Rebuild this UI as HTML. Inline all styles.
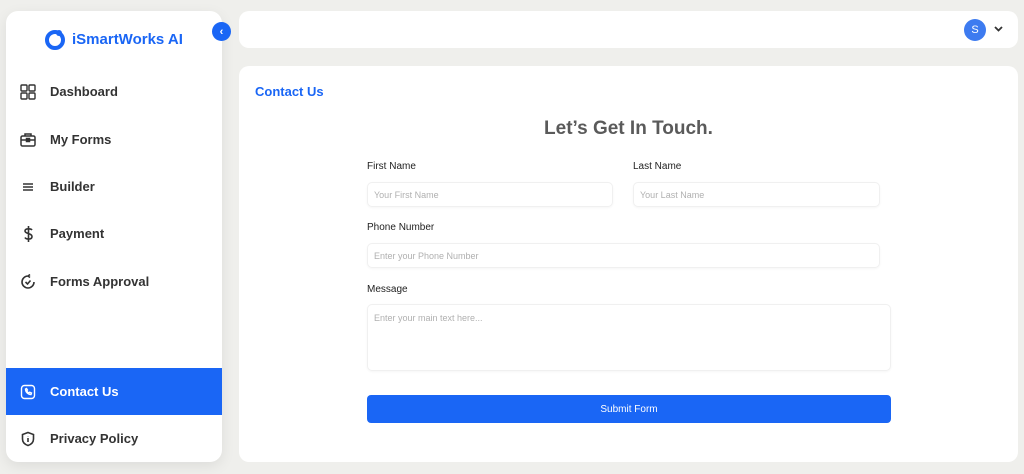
<!DOCTYPE html>
<html><head><meta charset="utf-8"><style>
*{box-sizing:border-box;margin:0;padding:0}
body{width:1024px;height:474px;background:#efefec;font-family:"Liberation Sans",sans-serif;position:relative;overflow:hidden}
.side{position:absolute;left:6px;top:11px;width:216px;height:451px;background:#fff;border-radius:12px;box-shadow:0 4px 14px rgba(0,0,0,.08);overflow:hidden}
.logo{position:absolute;left:38px;top:17px;display:flex;align-items:center;gap:6px;color:#1a66f5;font-weight:bold;font-size:15px}
.item{position:absolute;left:0;width:216px;height:47px;display:flex;align-items:center;font-size:13px;font-weight:bold;color:#333}
.item svg{position:absolute;left:14px}
.item span{position:absolute;left:44px}
.item.act{background:#1a66f5;color:#fff}
.coll{position:absolute;left:212px;top:22px;width:19px;height:19px;border-radius:50%;background:#1a66f5;color:#fff;font-size:11px;display:flex;align-items:center;justify-content:center;font-weight:bold}
.top{position:absolute;left:239px;top:11px;width:779px;height:37px;background:#fff;border-radius:10px}
.av{position:absolute;left:964px;top:19px;width:22px;height:22px;border-radius:50%;background:#3d7bf0;color:#fff;font-size:11px;display:flex;align-items:center;justify-content:center}
.main{position:absolute;left:239px;top:66px;width:779px;height:396px;background:#fff;border-radius:10px}
.crumb{position:absolute;left:255px;top:84px;color:#1a66f5;font-size:13px;font-weight:bold}
h1{position:absolute;left:367px;width:523px;top:118px;text-align:center;font-size:19px;color:#5a5a5a;font-weight:bold}
.lbl{position:absolute;font-size:10px;color:#222}
.inp{position:absolute;border:1px solid #f0f0f0;border-radius:5px;font-size:9px;color:#b0b0b0;padding-left:6px;display:flex;align-items:center;box-shadow:0 1px 2px rgba(0,0,0,.04)}
.btn{position:absolute;left:367px;top:395px;width:524px;height:28px;background:#1a66f5;border-radius:4px;color:#fff;font-size:10px;display:flex;align-items:center;justify-content:center}
</style></head><body>
<div class="side">
 <div class="logo"><svg width="22" height="22" viewBox="0 0 22 22"><circle cx="11" cy="12" r="8" fill="none" stroke="#1a66f5" stroke-width="4"/><circle cx="15" cy="5" r="3" fill="#1a66f5"/></svg>iSmartWorks AI</div>
 <div class="item" style="top:57px"><svg width="16" height="16" viewBox="0 0 16 16" fill="none" stroke="#333" stroke-width="1.4"><rect x="1" y="1" width="6" height="6" rx="1"/><rect x="9" y="1" width="6" height="6" rx="1"/><rect x="1" y="9" width="6" height="6" rx="1"/><rect x="9" y="9" width="6" height="6" rx="1"/></svg><span>Dashboard</span></div>
 <div class="item" style="top:105px"><svg width="16" height="16" viewBox="0 0 16 16" fill="none" stroke="#333" stroke-width="1.5"><rect x="1" y="4" width="14" height="10" rx="1.5"/><path d="M5 4V2h6v2M1 8h14"/><rect x="6.5" y="6.5" width="3" height="3" fill="#333"/></svg><span>My Forms</span></div>
 <div class="item" style="top:152px"><svg width="16" height="16" viewBox="0 0 16 16" stroke="#333" stroke-width="1.6"><path d="M3 5h10M3 8h10M3 11h10"/></svg><span>Builder</span></div>
 <div class="item" style="top:199px"><svg width="16" height="18" viewBox="0 0 16 18" fill="none" stroke="#333" stroke-width="1.6"><path d="M12 5c-1-1.5-7-2-7 1s7 2 7 5.5-6 3-7 1M8.5 1v16"/></svg><span>Payment</span></div>
 <div class="item" style="top:247px"><svg width="16" height="16" viewBox="0 0 16 16" fill="none" stroke="#333" stroke-width="1.6"><path d="M8 2a6 6 0 1 0 6 6M8 2l2-1.5M8 2l2 1.5M5.5 8l2 2 3-3.5"/></svg><span>Forms Approval</span></div>
 <div class="item act" style="top:357px"><svg width="16" height="16" viewBox="0 0 16 16" fill="none" stroke="#fff" stroke-width="1.4"><rect x="1.5" y="1.5" width="13" height="13" rx="3"/><path d="M5.5 5c0 3 2.5 5.5 5.5 5.5l.5-1.5-1.8-.8-.8.8c-1-.5-1.8-1.3-2.2-2.2l.8-.8L6.5 4.5z"/></svg><span>Contact Us</span></div>
 <div class="item" style="top:404px"><svg width="16" height="16" viewBox="0 0 16 16" fill="none" stroke="#333" stroke-width="1.6"><path d="M8 1.5l5.5 2v4.5c0 3.5-2.5 5.5-5.5 6.5-3-1-5.5-3-5.5-6.5V3.5z"/><path d="M8 7v4M8 5v.3"/></svg><span>Privacy Policy</span></div>
</div>
<div class="coll">‹</div>
<div class="top"></div>
<div class="av">S</div>
<svg style="position:absolute;left:994px;top:26px" width="9" height="6" viewBox="0 0 9 6" fill="none" stroke="#333" stroke-width="1.8"><path d="M1 1l3.5 3.5L8 1"/></svg>
<div class="main"></div>
<div class="crumb">Contact Us</div>
<h1>Let’s Get In Touch.</h1>
<div class="lbl" style="left:367px;top:161px">First Name</div>
<div class="lbl" style="left:633px;top:161px">Last Name</div>
<div class="inp" style="left:367px;top:182px;width:246px;height:25px">Your First Name</div>
<div class="inp" style="left:633px;top:182px;width:247px;height:25px">Your Last Name</div>
<div class="lbl" style="left:367px;top:222px">Phone Number</div>
<div class="inp" style="left:367px;top:243px;width:513px;height:25px">Enter your Phone Number</div>
<div class="lbl" style="left:367px;top:284px">Message</div>
<div class="inp" style="left:367px;top:304px;width:524px;height:67px;align-items:flex-start;padding-top:8px">Enter your main text here...</div>
<div class="btn">Submit Form</div>
</body></html>
